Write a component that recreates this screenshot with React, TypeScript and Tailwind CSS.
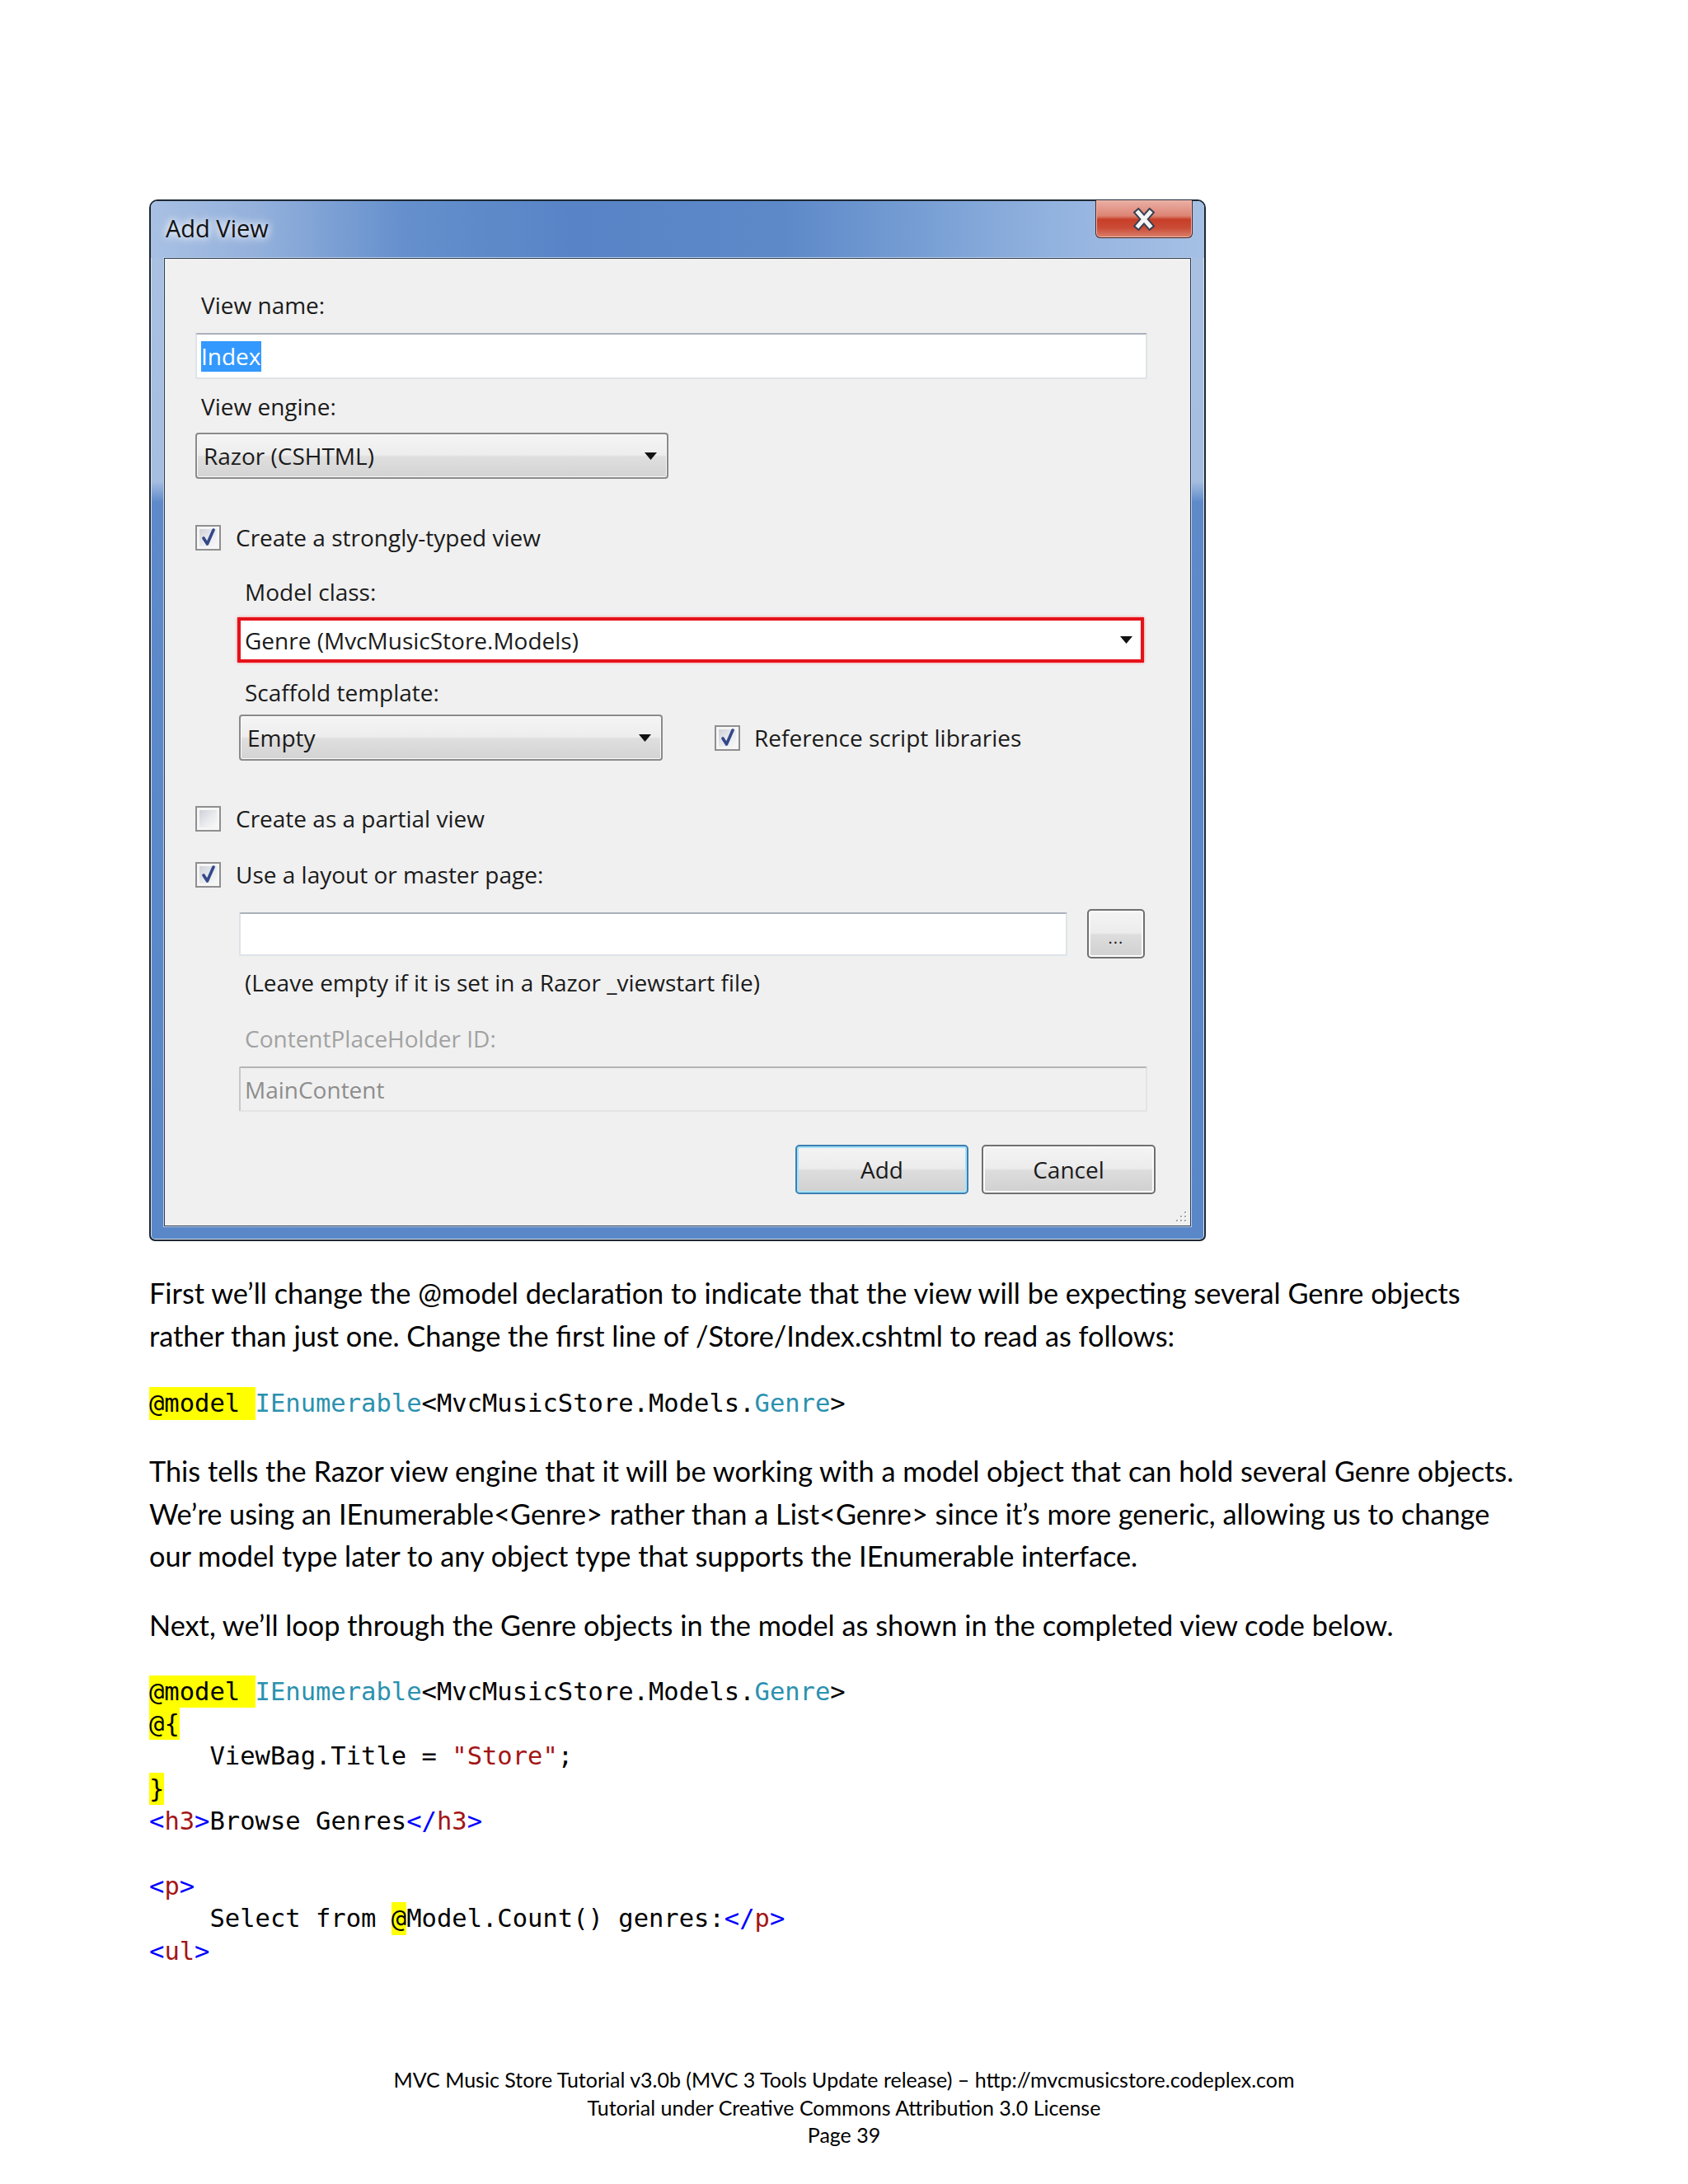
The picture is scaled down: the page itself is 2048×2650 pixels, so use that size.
import React from 'react'

function Arrow() {
  return (
    <svg width="15" height="9" viewBox="0 0 15 9" className="shrink-0">
      <path d="M0 0H15L7.5 9Z" fill="#111" />
    </svg>
  )
}

function Combo({ text, className }: { text: string; className: string }) {
  return (
    <div
      className={`${className} h-[56px] rounded-[4px] border-2 border-[#8a8a8a] bg-[linear-gradient(180deg,#f5f5f5_0%,#ededed_48%,#dfdfdf_52%,#d3d3d3_100%)] shadow-[inset_0_0_0_1px_#fbfbfb] flex items-center justify-between pl-[8px] pr-[12px]`}
    >
      <span className="leading-[38px]">{text}</span>
      <Arrow />
    </div>
  )
}

function Check({ on = false }: { on?: boolean }) {
  return (
    <span className="w-[31px] h-[31px] shrink-0 border-2 border-[#8f8f8f] bg-[#f6f6f6] p-[3px] flex">
      <span className="flex-1 bg-[linear-gradient(135deg,#cdd1d8_0%,#e9ebee_55%,#f8f8f8_100%)] flex items-center justify-center">
        {on && (
          <svg width="20" height="22" viewBox="0 0 20 22">
            <path d="M4 12 L8.5 19 L16 2" fill="none" stroke="#34488a" strokeWidth="3.6" strokeLinejoin="round" strokeLinecap="round" />
          </svg>
        )}
      </span>
    </span>
  )
}

function Grip() {
  const dots = [
    [12, 1],
    [12, 6],
    [7, 6],
    [12, 11],
    [7, 11],
    [2, 11],
  ]
  return (
    <svg width="16" height="15" viewBox="0 0 16 15" className="absolute right-[3px] bottom-[3px]">
      {dots.map(([x, y]) => (
        <g key={`${x}-${y}`}>
          <rect x={x + 1} y={y + 1} width="2" height="2" fill="#ffffff" />
          <rect x={x} y={y} width="2" height="2" fill="#a4a8ad" />
        </g>
      ))}
    </svg>
  )
}

function Hl({ children }: { children: React.ReactNode }) {
  return <span className="inline-block bg-[#ffff00] leading-[39.4px]">{children}</span>
}

function Tag({ name, close = false }: { name: string; close?: boolean }) {
  return (
    <>
      <span className="text-[#0000ff]">{close ? '</' : '<'}</span>
      <span className="text-[#a31515]">{name}</span>
      <span className="text-[#0000ff]">&gt;</span>
    </>
  )
}

function ModelLine() {
  return (
    <div>
      <Hl>@model </Hl>
      <span className="text-[#2b91af]">IEnumerable</span>&lt;MvcMusicStore.Models.
      <span className="text-[#2b91af]">Genre</span>&gt;
    </div>
  )
}

export default function App() {
  const field = 'bg-white border-2 border-[#dee3e9] border-t-[#aab1bb] rounded-[2px]'
  const btn =
    'h-[60px] rounded-[5px] border-2 bg-[linear-gradient(180deg,#f4f4f4_0%,#ececec_48%,#dddddd_52%,#d0d0d0_100%)] flex items-center justify-center'

  return (
    <div className="min-h-[2650px] bg-white pt-[242px] text-black">
      {/* dialog */}
      <div className="ml-[181px] w-[1282px] border-2 border-[#1e2935] rounded-t-[10px] rounded-b-[7px] bg-[linear-gradient(180deg,#aac1e2_0%,#a6bee0_27%,#5e8aca_29%,#5a87c8_100%)] shadow-[inset_0_0_0_1px_#d3e1f3] pb-[16px] flex flex-col font-['Open_Sans',sans-serif] text-[28px] text-[#1b1b1b]">
        <div className="h-[69px] rounded-t-[8px] bg-[linear-gradient(90deg,#a8c0e3_0%,#94b1dc_10%,#6590cd_24%,#5883c6_40%,#5d89c9_60%,#79a0d5_74%,#93b3df_86%,#a6c0e5_100%)] flex items-start justify-between">
          <span className="ml-[18px] mt-[14px] leading-[38px] text-[29px] text-[#111] [text-shadow:0_0_10px_#ffffff,0_0_14px_#ffffff]">
            Add View
          </span>
          <div className="-mt-[1px] mr-[14px] w-[118px] h-[46px] rounded-b-[6px] border border-t-0 border-[#4a2520] bg-[linear-gradient(180deg,#eab0a6_0%,#dd8474_42%,#c63e28_52%,#cb4c36_75%,#d9826f_100%)] shadow-[inset_0_0_0_1px_#f0b9ae] flex items-center justify-center">
            <svg width="28" height="28" viewBox="0 0 28 28">
              <path d="M7 6 L21 22 M21 6 L7 22" stroke="#3a4050" strokeWidth="9" strokeLinecap="square" />
              <path d="M7 6 L21 22 M21 6 L7 22" stroke="#f4f4f6" strokeWidth="5" strokeLinecap="square" />
            </svg>
          </div>
        </div>

        <div className="relative h-[1175px] mx-[16px] border border-[#2c3d52] shadow-[0_0_0_1px_#bccfe9] bg-[#f0f0f0] pl-[37px] flex flex-col">
          <div className="mt-[37px] ml-[7px] leading-[38px]">View name:</div>
          <div className={`mt-[15px] w-[1155px] h-[56px] ${field} flex items-center pl-[5px]`}>
            <span className="bg-[#3399ff] text-white leading-[37px]">Index</span>
          </div>
          <div className="mt-[14px] ml-[7px] leading-[38px]">View engine:</div>
          <Combo className="mt-[13px] w-[574px]" text="Razor (CSHTML)" />

          <div className="mt-[52px] h-[38px] flex items-center gap-[18px]">
            <Check on />
            <span>Create a strongly-typed view</span>
          </div>

          <div className="ml-[51px] flex flex-col">
            <div className="mt-[28px] ml-[9px] leading-[38px]">Model class:</div>
            <div className="mt-[12px] w-[1100px] h-[55px] border-[4px] border-[#e5121b] shadow-[0_0_3px_#ff7a7a] bg-white flex items-center justify-between pl-[5px] pr-[10px]">
              <span className="leading-[38px]">Genre (MvcMusicStore.Models)</span>
              <Arrow />
            </div>
            <div className="mt-[17px] ml-[9px] leading-[38px]">Scaffold template:</div>
            <div className="mt-[8px] flex items-center">
              <Combo className="ml-[2px] w-[514px]" text="Empty" />
              <div className="ml-[63px] flex items-center gap-[17px]">
                <Check on />
                <span>Reference script libraries</span>
              </div>
            </div>
          </div>

          <div className="mt-[51px] h-[38px] flex items-center gap-[18px]">
            <Check />
            <span>Create as a partial view</span>
          </div>
          <div className="mt-[30px] h-[38px] flex items-center gap-[18px]">
            <Check on />
            <span>Use a layout or master page:</span>
          </div>

          <div className="ml-[51px] flex flex-col">
            <div className="mt-[23px] flex items-center">
              <div className={`ml-[2px] w-[1005px] h-[53px] ${field}`} />
              <div className={`ml-[24px] w-[70px] ${btn} border-[#707070] shadow-[inset_0_0_0_2px_#fbfbfb]`}>
                <span className="text-[20px] leading-none pt-[10px] tracking-[1px]">...</span>
              </div>
            </div>
            <div className="mt-[10px] ml-[9px] leading-[38px]">(Leave empty if it is set in a Razor _viewstart file)</div>
            <div className="mt-[30px] ml-[9px] leading-[38px] text-[#a2a2a2]">ContentPlaceHolder ID:</div>
            <div className="mt-[15px] ml-[2px] w-[1102px] h-[55px] border-2 border-[#e4e4e4] border-t-[#b4b4b4] border-l-[#c8c8c8] rounded-[2px] bg-[#f0f0f0] flex items-center pl-[5px] text-[#8d8d8d]">
              MainContent
            </div>
          </div>

          <div className="mt-[40px] flex justify-end gap-[16px] pr-[42px]">
            <div className={`w-[210px] ${btn} border-[#3c7fb1] shadow-[inset_0_0_0_2px_#a6e2f8]`}>Add</div>
            <div className={`w-[211px] ${btn} border-[#707070] shadow-[inset_0_0_0_2px_#fbfbfb]`}>Cancel</div>
          </div>

          <Grip />
        </div>
      </div>

      {/* document text */}
      <div className="ml-[181px] font-['Lato',sans-serif] text-[34.3px] leading-[51.7px]">
        <p className="mt-[37px]">
          First we’ll change the @model declaration to indicate that the view will be expecting several Genre objects
          <br />
          rather than just one. Change the first line of /Store/Index.cshtml to read as follows:
        </p>
      </div>

      <div className="ml-[181px] mt-[37px] font-['DejaVu_Sans_Mono',monospace] text-[30.5px] leading-[39.4px] whitespace-pre">
        <ModelLine />
      </div>

      <div className="ml-[181px] font-['Lato',sans-serif] text-[34.3px] leading-[51.7px]">
        <p className="mt-[36px]">
          This tells the Razor view engine that it will be working with a model object that can hold several Genre objects.
          <br />
          We’re using an IEnumerable&lt;Genre&gt; rather than a List&lt;Genre&gt; since it’s more generic, allowing us to change
          <br />
          our model type later to any object type that supports the IEnumerable interface.
        </p>
        <p className="mt-[32px]">
          Next, we’ll loop through the Genre objects in the model as shown in the completed view code below.
        </p>
      </div>

      <div className="ml-[181px] mt-[35px] font-['DejaVu_Sans_Mono',monospace] text-[30.5px] leading-[39.4px] whitespace-pre">
        <ModelLine />
        <div>
          <Hl>@{'{'}</Hl>
        </div>
        <div>
          {'    ViewBag.Title = '}
          <span className="text-[#a31515]">"Store"</span>;
        </div>
        <div>
          <Hl>{'}'}</Hl>
        </div>
        <div>
          <Tag name="h3" />
          Browse Genres
          <Tag name="h3" close />
        </div>
        <div>{' '}</div>
        <div>
          <Tag name="p" />
        </div>
        <div>
          {'    Select from '}
          <Hl>@</Hl>
          {'Model.Count() genres:'}
          <Tag name="p" close />
        </div>
        <div>
          <Tag name="ul" />
        </div>
      </div>

      <div className="mt-[120px] text-center font-['Lato',sans-serif] text-[25px] leading-[33.5px]">
        <div>MVC Music Store Tutorial v3.0b (MVC 3 Tools Update release) – http://mvcmusicstore.codeplex.com</div>
        <div>Tutorial under Creative Commons Attribution 3.0 License</div>
        <div>Page 39</div>
      </div>
    </div>
  )
}
